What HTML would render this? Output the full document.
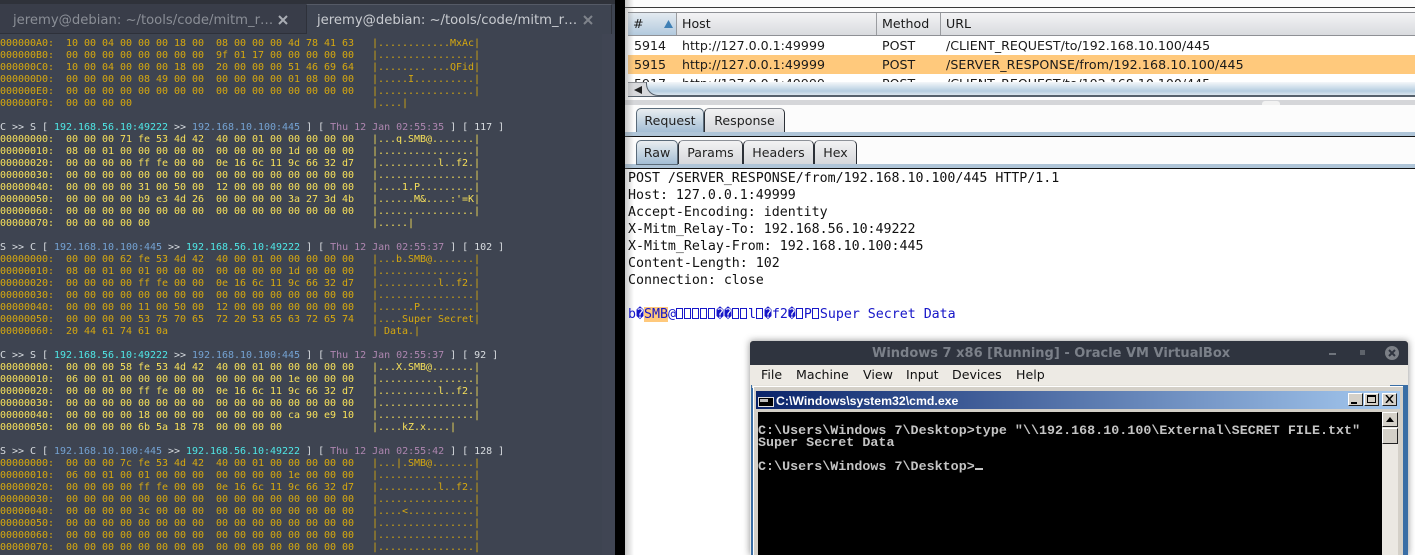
<!DOCTYPE html>
<html><head><meta charset="utf-8"><style>
html,body{margin:0;padding:0;background:#000}
#r{position:relative;width:1415px;height:555px;overflow:hidden;background:#000}
#r div,#r span.a{position:absolute}
pre{margin:0;font:10px/12px "DejaVu Sans Mono","Liberation Mono",monospace;letter-spacing:-.02px;position:absolute;left:0;white-space:pre}
.am{color:#d6a80f}.ye{color:#f7e05a}.w{color:#d8dce0}.c{color:#4fe6e6}.b{color:#74a2d2}.m{color:#ae86b0}
.ui{font-family:"DejaVu Sans","Liberation Sans",sans-serif;font-size:12.6px;color:#1a1a1a;white-space:nowrap}
.tab{border:1px solid #2c3138;border-top-color:#8d9198;border-radius:5px 5px 0 0;box-sizing:border-box;background:linear-gradient(#f2f2f3,#d6d8dc);text-align:center;color:#222;font:12.6px "DejaVu Sans",sans-serif;padding-top:4px}
.act{background:linear-gradient(#e9edf0,#a3bed5);border-color:#5a6b7a}
.hd{top:13px;height:22px;background:linear-gradient(#f3f3f5,#d9dbdf);border-right:1px solid #9a9ca0;box-sizing:border-box;padding:3px 0 0 5px}
.row{left:628px;right:0;height:19px;background:#fff}
.row span{position:absolute;top:2px}
.req{position:absolute;left:628px;font:13.3px/17px "DejaVu Sans Mono",monospace;color:#111;white-space:pre}
.bx{display:inline-block;width:5px;height:9px;border:1px solid #1616c8;margin-right:1px;vertical-align:-1px}
.con{position:absolute;left:758px;font:bold 13.33px/12px "Liberation Mono",monospace;letter-spacing:.03px;color:#c4c4c4;white-space:pre}
.men{top:367px;font:12.6px "DejaVu Sans",sans-serif;color:#111}
.wb{top:393px;width:15px;height:13px;background:#d4d0c8;border:1px solid #222;border-top-color:#fff;border-left-color:#fff;box-sizing:border-box}
</style></head><body><div id="r">

<div style="left:0;top:0;width:615px;height:555px;background:#3e4451"></div>
<div style="left:602px;top:34px;width:13px;height:521px;background:#404553"></div>
<div style="left:0;top:0;width:615px;height:4px;background:#2f323a"></div>
<div style="left:0;top:4px;width:306px;height:29px;background:#393d49"></div>
<div style="left:0;top:33px;width:306px;height:1px;background:#2e313a"></div>
<div style="left:306px;top:4px;width:306px;height:30px;background:#3e4451;border-top:1px solid #555a66;border-left:1px solid #2e313a;border-right:1px solid #2e313a;box-sizing:border-box"></div>
<div class="ui" style="left:13px;top:13px;font-size:13.2px;color:#8a8e96">jeremy@debian: ~/tools/code/mitm_r…</div>
<div class="ui" style="left:317px;top:13px;font-size:13.2px;color:#c8cbd0">jeremy@debian: ~/tools/code/mitm_r…</div>
<svg style="position:absolute;left:278px;top:15px" width="10" height="10"><path d="M1 1L9 9M9 1L1 9" stroke="#a9adb3" stroke-width="2"/></svg>
<svg style="position:absolute;left:583px;top:15px" width="10" height="10"><path d="M1 1L9 9M9 1L1 9" stroke="#7f838b" stroke-width="2"/></svg>

<pre style="top:38px"><span class="am">000000A0:  10 00 04 00 00 00 18 00  08 00 00 00 4d 78 41 63   |............MxAc|
000000B0:  00 00 00 00 00 00 00 00  9f 01 17 00 00 00 00 00   |................|
000000C0:  10 00 04 00 00 00 18 00  20 00 00 00 51 46 69 64   |........ ...QFid|
000000D0:  00 00 00 00 08 49 00 00  00 00 00 00 01 08 00 00   |.....I..........|
000000E0:  00 00 00 00 00 00 00 00  00 00 00 00 00 00 00 00   |................|
000000F0:  00 00 00 00                                        |....|</span>

<span class="w">C &gt;&gt; S [ </span><span class="c">192.168.56.10:49222</span><span class="w"> &gt;&gt; </span><span class="b">192.168.10.100:445</span><span class="w"> ] [ </span><span class="m">Thu 12 Jan 02:55:35</span><span class="w"> ] [ 117 ]</span>
<span class="ye">00000000:  00 00 00 71 fe 53 4d 42  40 00 01 00 00 00 00 00   |...q.SMB@.......|
00000010:  08 00 01 00 00 00 00 00  00 00 00 00 1d 00 00 00   |................|
00000020:  00 00 00 00 ff fe 00 00  0e 16 6c 11 9c 66 32 d7   |..........l..f2.|
00000030:  00 00 00 00 00 00 00 00  00 00 00 00 00 00 00 00   |................|
00000040:  00 00 00 00 31 00 50 00  12 00 00 00 00 00 00 00   |....1.P.........|
00000050:  00 00 00 00 b9 e3 4d 26  00 00 00 00 3a 27 3d 4b   |......M&amp;....:'=K|
00000060:  00 00 00 00 00 00 00 00  00 00 00 00 00 00 00 00   |................|
00000070:  00 00 00 00 00                                     |.....|</span>

<span class="w">S &gt;&gt; C [ </span><span class="b">192.168.10.100:445</span><span class="w"> &gt;&gt; </span><span class="c">192.168.56.10:49222</span><span class="w"> ] [ </span><span class="m">Thu 12 Jan 02:55:37</span><span class="w"> ] [ 102 ]</span>
<span class="am">00000000:  00 00 00 62 fe 53 4d 42  40 00 01 00 00 00 00 00   |...b.SMB@.......|
00000010:  08 00 01 00 01 00 00 00  00 00 00 00 1d 00 00 00   |................|
00000020:  00 00 00 00 ff fe 00 00  0e 16 6c 11 9c 66 32 d7   |..........l..f2.|
00000030:  00 00 00 00 00 00 00 00  00 00 00 00 00 00 00 00   |................|
00000040:  00 00 00 00 11 00 50 00  12 00 00 00 00 00 00 00   |......P.........|
00000050:  00 00 00 00 53 75 70 65  72 20 53 65 63 72 65 74   |....Super Secret|
00000060:  20 44 61 74 61 0a                                  | Data.|</span>

<span class="w">C &gt;&gt; S [ </span><span class="c">192.168.56.10:49222</span><span class="w"> &gt;&gt; </span><span class="b">192.168.10.100:445</span><span class="w"> ] [ </span><span class="m">Thu 12 Jan 02:55:37</span><span class="w"> ] [ 92 ]</span>
<span class="ye">00000000:  00 00 00 58 fe 53 4d 42  40 00 01 00 00 00 00 00   |...X.SMB@.......|
00000010:  06 00 01 00 00 00 00 00  00 00 00 00 1e 00 00 00   |................|
00000020:  00 00 00 00 ff fe 00 00  0e 16 6c 11 9c 66 32 d7   |..........l..f2.|
00000030:  00 00 00 00 00 00 00 00  00 00 00 00 00 00 00 00   |................|
00000040:  00 00 00 00 18 00 00 00  00 00 00 00 ca 90 e9 10   |................|
00000050:  00 00 00 00 6b 5a 18 78  00 00 00 00               |....kZ.x....|</span>

<span class="w">S &gt;&gt; C [ </span><span class="b">192.168.10.100:445</span><span class="w"> &gt;&gt; </span><span class="c">192.168.56.10:49222</span><span class="w"> ] [ </span><span class="m">Thu 12 Jan 02:55:42</span><span class="w"> ] [ 128 ]</span>
<span class="am">00000000:  00 00 00 7c fe 53 4d 42  40 00 01 00 00 00 00 00   |...|.SMB@.......|
00000010:  06 00 01 00 01 00 00 00  00 00 00 00 1e 00 00 00   |................|
00000020:  00 00 00 00 ff fe 00 00  0e 16 6c 11 9c 66 32 d7   |..........l..f2.|
00000030:  00 00 00 00 00 00 00 00  00 00 00 00 00 00 00 00   |................|
00000040:  00 00 00 00 3c 00 00 00  00 00 00 00 00 00 00 00   |....&lt;...........|
00000050:  00 00 00 00 00 00 00 00  00 00 00 00 00 00 00 00   |................|
00000060:  00 00 00 00 00 00 00 00  00 00 00 00 00 00 00 00   |................|
00000070:  00 00 00 00 00 00 00 00  00 00 00 00 00 00 00 00   |................|</span></pre>

<div style="left:625px;top:0;width:790px;height:555px;background:#fcfcfc"></div>
<div style="left:625px;top:7px;width:790px;height:1px;background:#3a3a3a"></div>
<div style="left:628px;top:12px;width:787px;height:1px;background:#8e9095"></div>
<div style="left:628px;top:35px;width:787px;height:1px;background:#8e9095"></div>
<div style="left:628px;top:13px;width:787px;height:22px;background:linear-gradient(#f3f3f5,#d9dbdf)"></div>
<div class="hd ui" style="left:628px;width:49px;background:linear-gradient(#e3eaf0,#b3cade)">#</div>
<svg style="position:absolute;left:664px;top:20px" width="9" height="8"><path d="M4.5 0L9 8H0Z" fill="#3f80b5"/></svg>
<div class="hd ui" style="left:677px;width:200px">Host</div>
<div class="hd ui" style="left:877px;width:64px">Method</div>
<div class="hd ui" style="left:941px;width:474px;border-right:0;padding-left:5px">URL</div>

<div class="row ui" style="top:36px"><span style="left:6px">5914</span><span style="left:54px">http://127.0.0.1:49999</span><span style="left:254px">POST</span><span style="left:318px">/CLIENT_REQUEST/to/192.168.10.100/445</span></div>
<div class="row ui" style="top:55px;background:#ffc97c"><span style="left:6px">5915</span><span style="left:54px">http://127.0.0.1:49999</span><span style="left:254px">POST</span><span style="left:318px;letter-spacing:.1px">/SERVER_RESPONSE/from/192.168.10.100/445</span></div>
<div class="row ui" style="top:74px;height:8px;overflow:hidden"><span style="left:6px">5917</span><span style="left:54px">http://127.0.0.1:49999</span><span style="left:254px">POST</span><span style="left:318px">/CLIENT_REQUEST/to/192.168.10.100/445</span></div>

<div style="left:628px;top:82px;width:787px;height:15px;background:#d8d9dc;border-top:1px solid #8e9095;border-bottom:1px solid #55606b;box-sizing:border-box"></div>
<svg style="position:absolute;left:634px;top:86px" width="8" height="8"><path d="M0 4L8 0V8Z" fill="#222"/></svg>
<div style="left:646px;top:82px;width:769px;height:14px;background:linear-gradient(#f4f7f9,#b5cde0 70%,#dbe6ee);border-left:1px solid #55606b;border-bottom:1px solid #55606b;border-radius:0 0 0 12px;box-sizing:border-box"></div>
<div style="left:625px;top:100px;width:790px;height:5px;background:#d5d6d9"></div>
<div style="left:1262px;top:101px;width:18px;height:4px;background:#f2f2f2;border-radius:3px 3px 0 0"></div>

<div class="tab act" style="left:636px;top:108px;width:68px;height:25px">Request</div>
<div class="tab" style="left:704px;top:108px;width:81px;height:25px">Response</div>
<div style="left:625px;top:132px;width:790px;height:4px;background:#afc5d8"></div>
<div style="left:625px;top:136px;width:790px;height:1px;background:#111"></div>
<div class="tab act" style="left:636px;top:140px;width:42px;height:25px;z-index:1">Raw</div>
<div class="tab" style="left:678px;top:140px;width:65px;height:25px">Params</div>
<div class="tab" style="left:743px;top:140px;width:71px;height:25px">Headers</div>
<div class="tab" style="left:814px;top:140px;width:43px;height:25px">Hex</div>
<div style="left:625px;top:164px;width:790px;height:4px;background:#afc5d8"></div>
<div style="left:625px;top:168px;width:790px;height:1px;background:#111"></div>
<div style="left:625px;top:169px;width:790px;height:386px;background:#fff"></div>
<div style="left:625px;top:0;width:9px;height:555px;background:linear-gradient(90deg,rgba(120,120,120,.4),rgba(255,255,255,0))"></div>

<pre class="req" style="top:170px">POST /SERVER_RESPONSE/from/192.168.10.100/445 HTTP/1.1
Host: 127.0.0.1:49999
Accept-Encoding: identity
X-Mitm_Relay-To: 192.168.56.10:49222
X-Mitm_Relay-From: 192.168.10.100:445
Content-Length: 102
Connection: close

<span style="color:#1616c8">b�<span style="background:#ffc97c">SMB</span>@<i class="bx"></i><i class="bx"></i><i class="bx"></i><i class="bx"></i><i class="bx"></i>��<i class="bx"></i><i class="bx"></i>l<i class="bx"></i>�f2�<i class="bx"></i>P<i class="bx"></i>Super Secret Data</span></pre>

<div style="left:750px;top:341px;width:658px;height:214px;background:#edeae4;box-shadow:0 0 7px rgba(0,0,0,.45)"></div>
<div style="left:750px;top:341px;width:658px;height:24px;background:#2f343f;border-radius:3px 3px 0 0"></div>
<div class="ui" style="left:872px;top:346px;width:358px;font-weight:bold;font-size:13px;color:#7b8089;text-align:center">Windows 7 x86 [Running] - Oracle VM VirtualBox</div>
<div style="left:1329px;top:353px;width:7px;height:2px;background:#6f747c"></div>
<div style="left:1360px;top:350px;width:5px;height:5px;background:#5e636b"></div>
<div style="left:1385px;top:346px;width:14px;height:14px;border-radius:7px;background:#7c8087"></div>
<svg style="position:absolute;left:1388px;top:349px" width="8" height="8"><path d="M1 1L7 7M7 1L1 7" stroke="#2f343f" stroke-width="2"/></svg>
<div class="men" style="left:761px">File</div>
<div class="men" style="left:796px">Machine</div>
<div class="men" style="left:863px">View</div>
<div class="men" style="left:906px">Input</div>
<div class="men" style="left:952px">Devices</div>
<div class="men" style="left:1016px">Help</div>

<div style="left:751px;top:385px;width:657px;height:170px;background:#3a6ea5"></div>
<div style="left:752px;top:385px;width:638px;height:3px;background:#e6e3dc"></div>
<div style="left:753px;top:386px;width:650px;height:169px;background:#d4d0c8;border-top:1px solid #fff;border-left:1px solid #fff;box-sizing:border-box"></div>
<div style="left:756px;top:391px;width:644px;height:18px;background:linear-gradient(90deg,#0a246a,#a6caf0)"></div>
<div style="left:758px;top:397px;width:16px;height:10px;background:#000;border:1px solid #ddd;box-sizing:border-box"></div>
<div style="left:760px;top:399px;width:8px;height:3px;background:#bbb"></div>
<div class="ui" style="left:776px;top:394px;color:#fff;font:bold 12.3px 'Liberation Sans',sans-serif">C:\Windows\system32\cmd.exe</div>
<div class="wb" style="left:1348px"></div><div style="left:1351px;top:402px;width:6px;height:2px;background:#000"></div>
<div class="wb" style="left:1364px"></div><div style="left:1367px;top:395px;width:9px;height:8px;border:1px solid #000;border-top-width:2px;box-sizing:border-box"></div>
<div class="wb" style="left:1382px"></div>
<svg style="position:absolute;left:1385px;top:395px" width="9" height="8"><path d="M1 0L8 8M8 0L1 8" stroke="#000" stroke-width="1.5"/></svg>

<div style="left:758px;top:412px;width:624px;height:143px;background:#000"></div>
<pre class="con" style="top:426px">C:\Users\Windows 7\Desktop&gt;type "\\192.168.10.100\External\SECRET FILE.txt"
Super Secret Data

C:\Users\Windows 7\Desktop&gt;<span style="display:inline-block;width:8px;height:2px;background:#c4c4c4"></span></pre>

<div style="left:1382px;top:412px;width:16px;height:143px;background:#ebe8e2"></div>
<div class="wb" style="left:1382px;top:412px;width:16px;height:15px"></div>
<svg style="position:absolute;left:1386px;top:417px" width="8" height="5"><path d="M4 0L8 5H0Z" fill="#000"/></svg>
<div class="wb" style="left:1382px;top:428px;width:16px;height:16px"></div>

</div></body></html>
